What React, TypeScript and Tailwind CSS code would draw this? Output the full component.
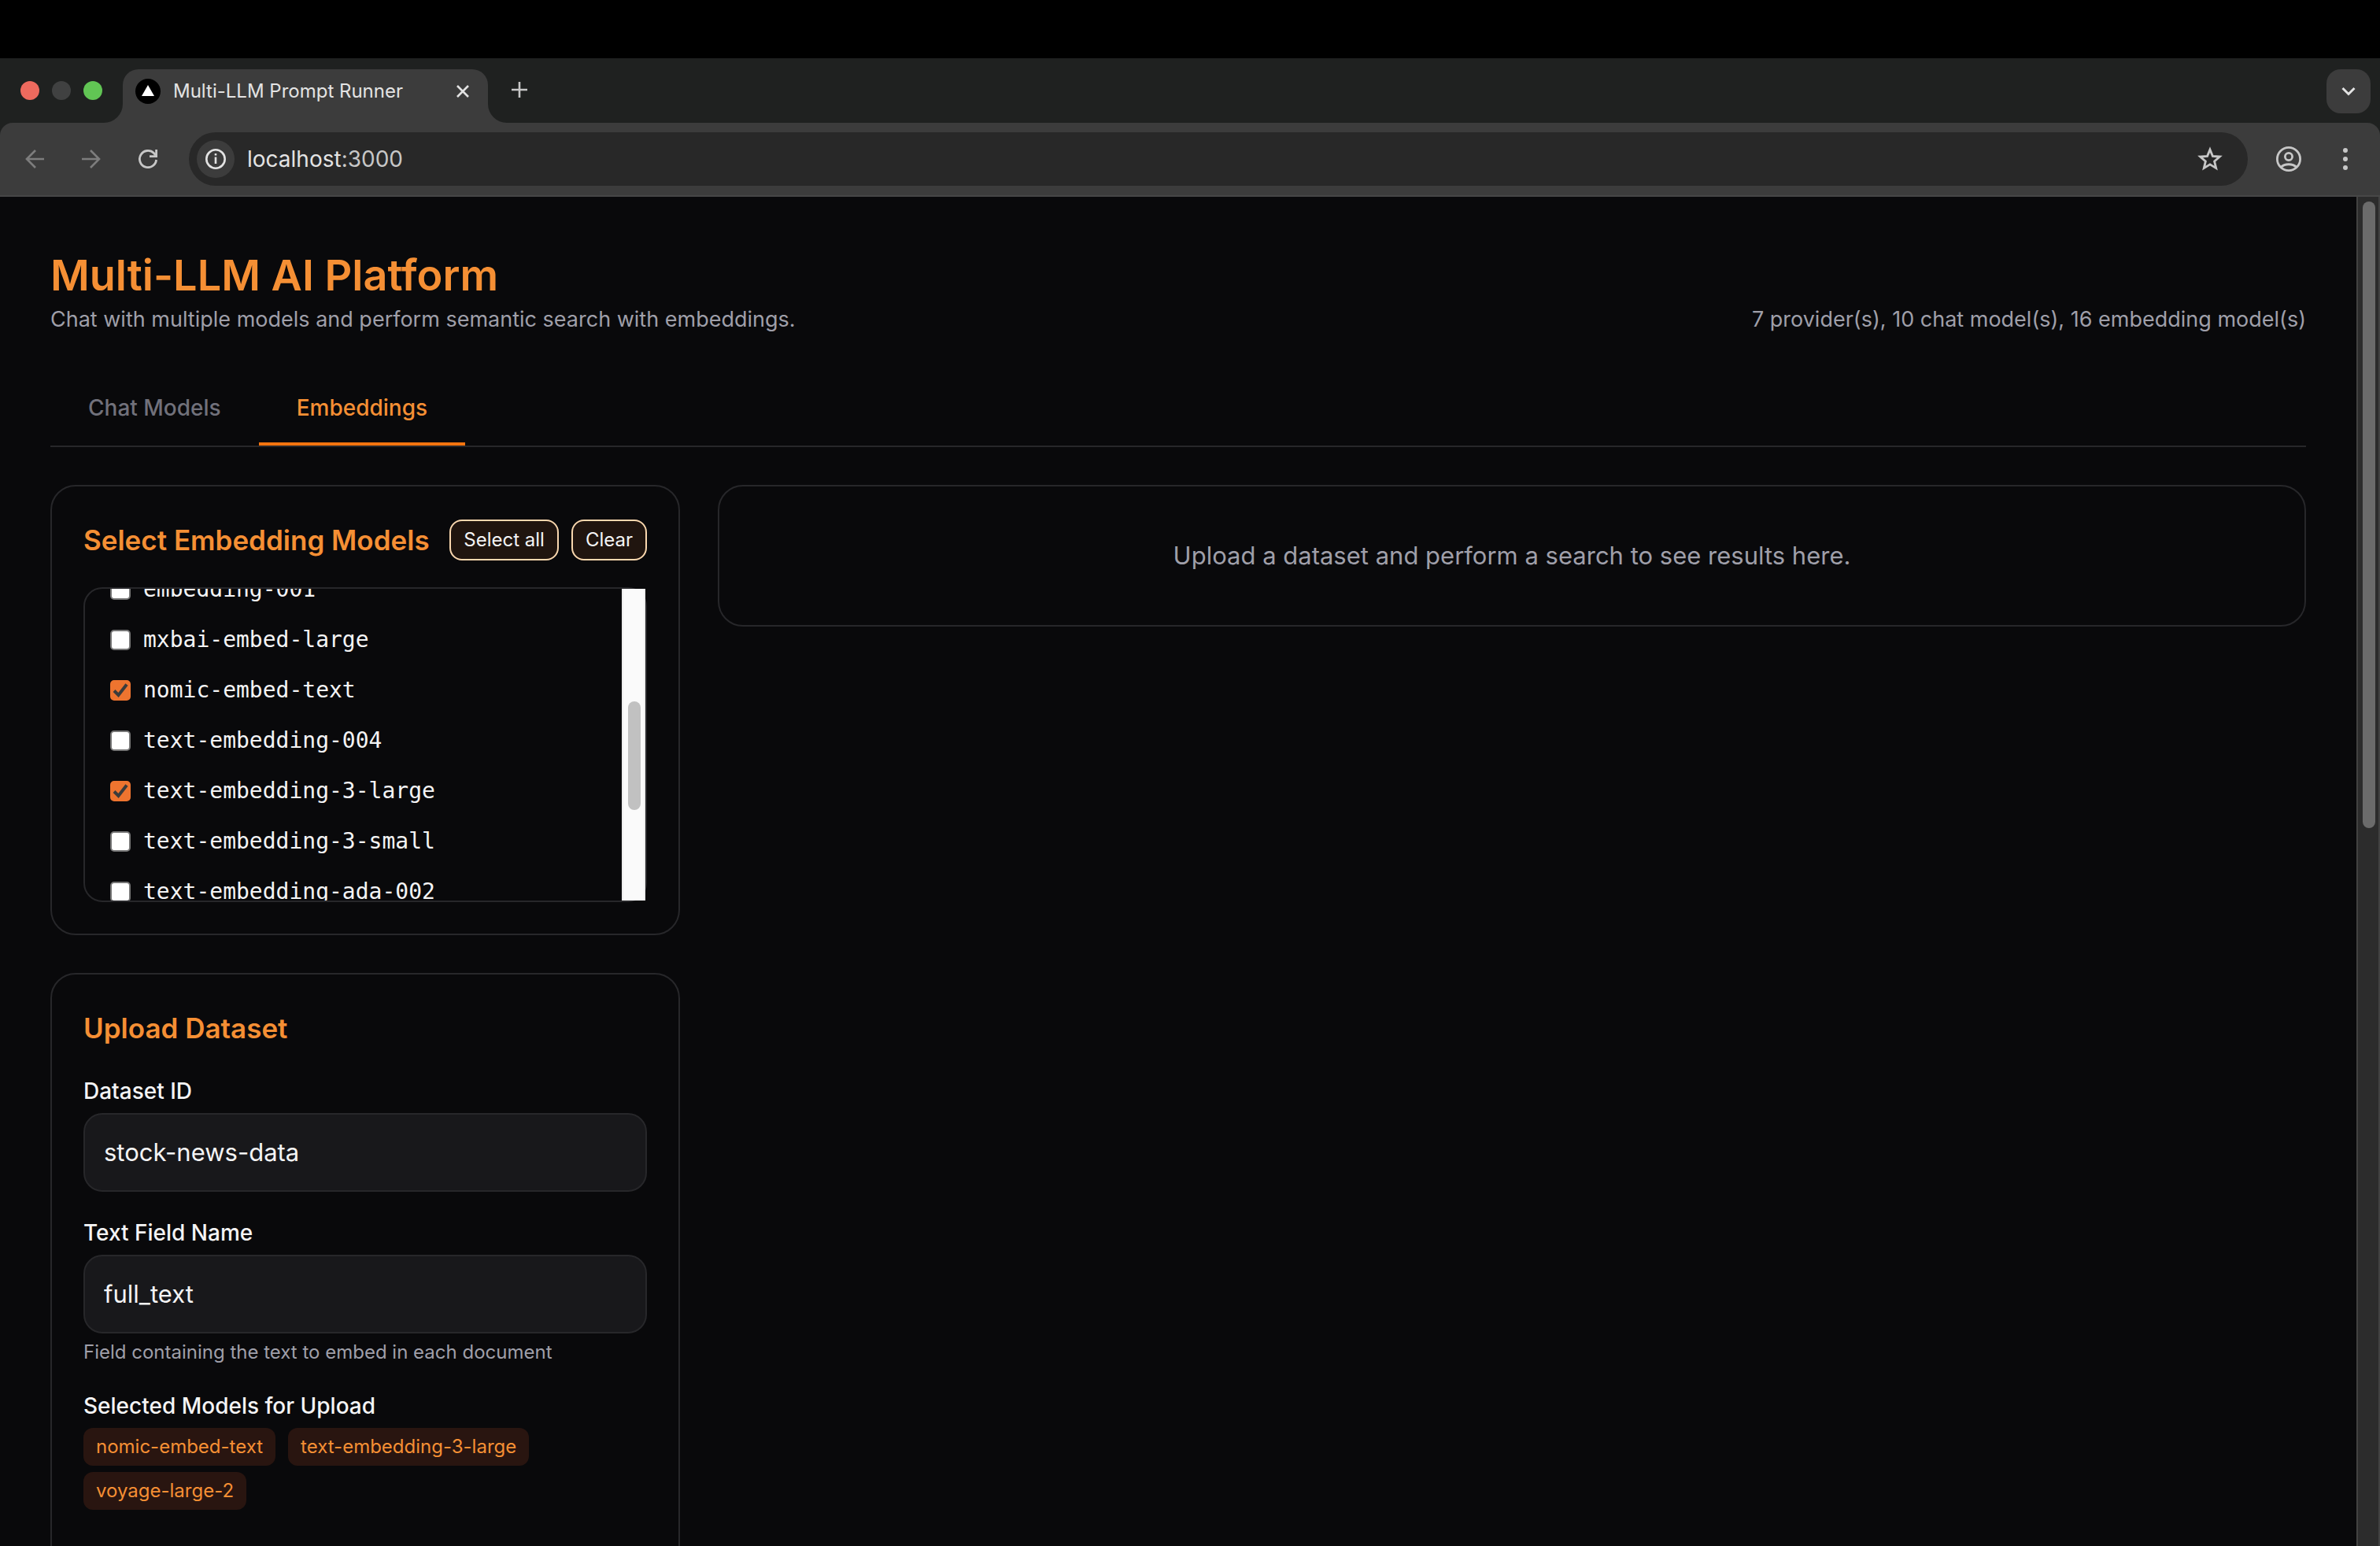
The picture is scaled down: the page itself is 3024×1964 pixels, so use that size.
import { useState } from "react";
import type { ReactNode } from "react";

const MODELS = [
  "embedding-001",
  "mxbai-embed-large",
  "nomic-embed-text",
  "text-embedding-004",
  "text-embedding-3-large",
  "text-embedding-3-small",
  "text-embedding-ada-002",
];

function TabFlare({ flip = false }: { flip?: boolean }) {
  return (
    <svg viewBox="0 0 24 24" className="size-6 shrink-0 text-[#3c3c3c]" aria-hidden="true">
      <path fill="currentColor" d={flip ? "M0 0A24 24 0 0 0 24 24H0Z" : "M24 0A24 24 0 0 1 0 24H24Z"} />
    </svg>
  );
}

function TabStrip() {
  return (
    <div className="flex items-end bg-[#1f2120] pt-3.5">
      <div className="flex w-[132px] shrink-0 gap-4 self-stretch pt-[15px] pl-[26px]">
        <span className="size-6 rounded-full bg-[#ed6a5e]" />
        <span className="size-6 rounded-full bg-[#404141]" />
        <span className="size-6 rounded-full bg-[#61c554]" />
      </div>
      <TabFlare />
      <div className="flex h-[68px] w-[464px] items-center rounded-t-[20px] bg-[#3c3c3c] pr-6 pb-3 pl-4">
        <svg viewBox="0 0 32 32" className="size-8" aria-hidden="true">
          <circle cx="16" cy="16" r="16" fill="#000" />
          <path d="M16 8 24 22H8Z" fill="#fff" />
        </svg>
        <span className="ml-4 flex-1 text-2xl whitespace-nowrap text-[#e3e3e3]">Multi-LLM Prompt Runner</span>
        <button type="button" aria-label="Close tab">
          <svg viewBox="0 0 16 16" className="size-4" fill="none" stroke="#e3e3e3" strokeWidth="2.6">
            <path d="m1 1 14 14M15 1 1 15" />
          </svg>
        </button>
      </div>
      <TabFlare flip />
      <button type="button" aria-label="New tab" className="mb-8 ml-1.5">
        <svg viewBox="0 0 20 20" className="size-5" fill="none" stroke="#c7c7c7" strokeWidth="2.6">
          <path d="M10 0v20M0 10h20" />
        </svg>
      </button>
      <button
        type="button"
        aria-label="Search tabs"
        className="mr-3 mb-3 ml-auto flex size-14 items-center justify-center rounded-[18px] bg-[#3c3c3c]"
      >
        <svg viewBox="0 0 18 12" className="h-3 w-[18px]" fill="none" stroke="#e3e3e3" strokeWidth="3">
          <path d="m1.5 2 7.5 7.5L16.5 2" />
        </svg>
      </button>
    </div>
  );
}

function Toolbar() {
  return (
    <div className="bg-[#1f2120]">
      <div className="flex h-[94px] items-center rounded-t-2xl border-b-2 border-[#474747] bg-[#3c3c3c] pl-8">
        <button type="button" aria-label="Back">
          <svg viewBox="0 0 24 24" className="size-6" fill="none" stroke="#7d7d7d" strokeWidth="2.6">
            <path d="M24 12H2M13 1 2 12l11 11" />
          </svg>
        </button>
        <button type="button" aria-label="Forward" className="ml-12">
          <svg viewBox="0 0 24 24" className="size-6" fill="none" stroke="#7d7d7d" strokeWidth="2.6">
            <path d="M0 12h22M11 1l11 11-11 11" />
          </svg>
        </button>
        <button type="button" aria-label="Reload" className="ml-12">
          <svg viewBox="0 0 24 24" className="size-6" fill="none" stroke="#c7c7c7" strokeWidth="2.8">
            <path d="M22.6 13A10.6 10.6 0 1 1 19.500 4.500L22 7.500" />
            <path d="M22.600 0v8.600H14" />
          </svg>
        </button>
        <div className="ml-10 flex h-[68px] flex-1 items-center rounded-full bg-[#282828] pr-8 pl-2.5">
          <button
            type="button"
            aria-label="View site information"
            className="flex size-12 items-center justify-center rounded-full bg-[#3c3c3c]"
          >
            <svg viewBox="0 0 26 26" className="size-[26px]" fill="none" stroke="#e3e3e3">
              <circle cx="13" cy="13" r="11.7" strokeWidth="2.6" />
              <path d="M13 10.500v8.500M13 6v2.600" strokeWidth="2.6" />
            </svg>
          </button>
          <span className="ml-4 flex-1 text-[28px] text-[#e3e3e3]">
            localhost<span className="text-[#c7c7c7]">:3000</span>
          </span>
          <button type="button" aria-label="Bookmark this tab">
            <svg viewBox="0 0 32 32" className="size-8" fill="none" stroke="#c7c7c7" strokeWidth="2.8">
              <path d="m16 4 3.400 8.300 9 .7-6.800 5.900 2.100 8.700-7.700-4.700-7.700 4.700 2.100-8.700-6.800-5.900 9-.7Z" />
            </svg>
          </button>
        </div>
        <button type="button" aria-label="Profile" className="ml-9">
          <svg viewBox="0 0 32 32" className="size-8" fill="none" stroke="#c7c7c7" strokeWidth="2.8">
            <circle cx="16" cy="16" r="14.6" />
            <circle cx="16" cy="13" r="4.6" />
            <path d="M6 26.500c5-5 15-5 20 0" />
          </svg>
        </button>
        <button type="button" aria-label="Menu" className="mr-10 ml-[52px]">
          <svg viewBox="0 0 8 28" className="h-7 w-2" fill="#c7c7c7">
            <circle cx="4" cy="3" r="3" />
            <circle cx="4" cy="14" r="3" />
            <circle cx="4" cy="25" r="3" />
          </svg>
        </button>
      </div>
    </div>
  );
}

function SmallButton({ children, onClick }: { children: ReactNode; onClick: () => void }) {
  return (
    <button
      type="button"
      onClick={onClick}
      className="rounded-2xl border-2 border-[#f9d7ae] bg-[#20150f] px-4 py-2 text-2xl whitespace-nowrap text-[#f4f4f5]"
    >
      {children}
    </button>
  );
}

function ModelRow({ name, checked, onToggle }: { name: string; checked: boolean; onToggle: () => void }) {
  return (
    <label className="flex h-10 items-center gap-4">
      <span className="grid size-[26px] shrink-0">
        <input
          type="checkbox"
          checked={checked}
          onChange={onToggle}
          className="col-start-1 row-start-1 size-[26px] appearance-none rounded-[5px] border-2 border-[#767676] bg-white checked:border-[#ee742f] checked:bg-[#ee742f]"
        />
        {checked && (
          <svg
            viewBox="0 0 26 26"
            className="pointer-events-none col-start-1 row-start-1 size-[26px]"
            fill="none"
            stroke="#3b3b3b"
            strokeWidth="4"
          >
            <path d="m5 13.500 5.500 5.500L21 5.500" />
          </svg>
        )}
      </span>
      <span className="font-['DejaVu_Sans_Mono',monospace] text-[28px] leading-10 whitespace-nowrap">{name}</span>
    </label>
  );
}

function TextField({ id, label, value, hint }: { id: string; label: string; value: string; hint?: string }) {
  return (
    <div className="flex flex-col gap-2">
      <label htmlFor={id} className="text-[28px] leading-10 font-medium">
        {label}
      </label>
      <input
        id={id}
        type="text"
        defaultValue={value}
        className="w-full rounded-3xl border-2 border-[#27272a] bg-[#18181b] px-6 py-6 text-[31px] leading-[48px]"
      />
      {hint && <p className="text-2xl text-[#9f9fa9]">{hint}</p>}
    </div>
  );
}

export default function App() {
  const [selected, setSelected] = useState(["nomic-embed-text", "text-embedding-3-large", "voyage-large-2"]);
  const toggle = (name: string) =>
    setSelected(selected.includes(name) ? selected.filter((m) => m !== name) : [...selected, name]);

  return (
    <div className="flex h-screen flex-col overflow-hidden bg-[#09090b] font-['Inter',sans-serif] text-[#f4f4f5]">
      <div className="h-[74px] shrink-0 bg-black" />
      <header className="shrink-0">
        <TabStrip />
        <Toolbar />
      </header>

      <div className="flex min-h-0 flex-1">
        <main className="min-w-0 flex-1 overflow-hidden p-16">
          <div className="flex items-end justify-between">
            <div>
              <h1 className="text-[54px] leading-[72px] font-semibold text-[#f58f34]">Multi-LLM AI Platform</h1>
              <p className="text-[27px] leading-10 text-[#9f9fa9]">
                Chat with multiple models and perform semantic search with embeddings.
              </p>
            </div>
            <p className="text-[27px] leading-10 text-[#9f9fa9]">
              7 provider(s), 10 chat model(s), 16 embedding model(s)
            </p>
          </div>

          <nav className="mt-12 flex border-b-2 border-[#27272a] text-[28px] leading-10 font-medium">
            <button type="button" className="border-b-4 border-transparent px-12 py-6 text-[#71717b]">
              Chat Models
            </button>
            <button type="button" className="border-b-4 border-[#f3740f] px-12 py-6 text-[#f58f34]">
              Embeddings
            </button>
          </nav>

          <div className="mt-12 grid grid-cols-[800px_1fr] items-start gap-12">
            <div className="flex flex-col gap-12">
              <section className="rounded-[32px] border-2 border-[#27272a] p-10">
                <div className="flex items-center justify-between">
                  <h2 className="text-[35px] leading-[56px] font-semibold whitespace-nowrap text-[#f58f34]">
                    Select Embedding Models
                  </h2>
                  <div className="flex gap-4">
                    <SmallButton onClick={() => setSelected(MODELS)}>Select all</SmallButton>
                    <SmallButton onClick={() => setSelected([])}>Clear</SmallButton>
                  </div>
                </div>
                <div className="mt-8 flex h-[400px] rounded-3xl border-2 border-[#27272a]">
                  <div className="flex-1 overflow-hidden px-8">
                    <div className="-mt-[19px] flex flex-col gap-6">
                      {MODELS.map((name) => (
                        <ModelRow
                          key={name}
                          name={name}
                          checked={selected.includes(name)}
                          onToggle={() => toggle(name)}
                        />
                      ))}
                    </div>
                  </div>
                  <div className="w-[30px] border-x-2 border-[#ededed] bg-[#fafafa] pt-[143px] pl-1.5">
                    <div className="h-[138px] w-4 rounded-full bg-[#c1c1c1]" />
                  </div>
                </div>
              </section>

              <section className="flex flex-col gap-8 rounded-[32px] border-2 border-[#27272a] p-10 pb-24">
                <h2 className="text-[35px] leading-[56px] font-semibold text-[#f58f34]">Upload Dataset</h2>
                <TextField id="dataset-id" label="Dataset ID" value="stock-news-data" />
                <TextField
                  id="text-field"
                  label="Text Field Name"
                  value="full_text"
                  hint="Field containing the text to embed in each document"
                />
                <div>
                  <h3 className="text-[28px] leading-10 font-medium">Selected Models for Upload</h3>
                  <ul className="mt-2 flex flex-wrap gap-x-4 gap-y-2">
                    {selected.map((name) => (
                      <li key={name} className="rounded-xl bg-[#291510] px-4 py-2 text-2xl text-[#f58f34]">
                        {name}
                      </li>
                    ))}
                  </ul>
                </div>
              </section>
            </div>

            <section className="rounded-[32px] border-2 border-[#27272a] px-10 py-16 text-center text-[31px] leading-[48px] text-[#9f9fa9]">
              Upload a dataset and perform a search to see results here.
            </section>
          </div>
        </main>
        <div className="w-[30px] shrink-0 border-x-2 border-[#424242] bg-[#2c2c2c] pt-1.5 pl-1.5">
          <div className="h-[796px] w-4 rounded-full bg-[#6b6b6b]" />
        </div>
      </div>
    </div>
  );
}
